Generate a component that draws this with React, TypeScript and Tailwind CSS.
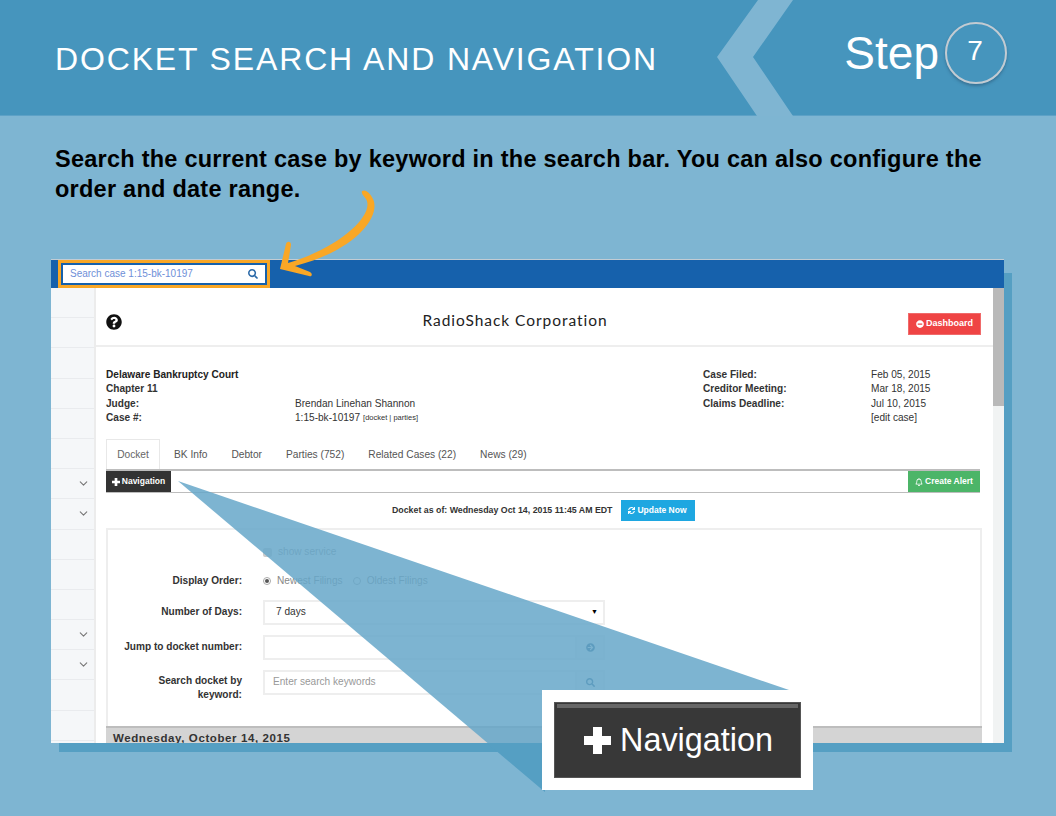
import { ChevronDown } from "lucide-react";
import {
    FaArrowCircleRight,
    FaMinusCircle,
    FaQuestionCircle,
    FaRegBell,
    FaSearch,
    FaSync,
} from "react-icons/fa";

const sideRows = [0, 1, 2, 3, 4, 5, 6, 7, 8, 9, 10, 11, 12, 13, 14, 15];
const chevrons = [6, 7, 11, 12];
const tabs = [
    { label: "BK Info", cls: "ml-[14px]" },
    { label: "Debtor", cls: "ml-[24px]" },
    { label: "Parties (752)", cls: "ml-[24px]" },
    { label: "Related Cases (22)", cls: "ml-[24px]" },
    { label: "News (29)", cls: "ml-[24px]" },
];

function ThickPlus({ size }: { size: number }) {
    return (
        <svg width={size} height={size} viewBox="0 0 27 27" fill="currentColor" className="shrink-0">
            <path d="M9 0h9v9h9v9h-9v9H9v-9H0V9h9z" />
        </svg>
    );
}

function App() {
    return (
        <div className="relative w-[1056px] h-[816px] overflow-hidden bg-[#7eb5d2] font-['Liberation_Sans',Arial,sans-serif]">
            {/* HEADER */}
            <div className="relative h-[116px] bg-[#4695bd] flex justify-between border-b border-[#5da1c6]">
                <svg className="absolute left-0 top-0" width="1056" height="116">
                    <polygon points="758,0 793,0 753,57 793,116 757,116 717,57" fill="#7fb5d2" />
                </svg>
                <h1 className="relative ml-[55px] mt-[41px] text-[32px] leading-[36px] tracking-[1.85px] text-white">
                    DOCKET SEARCH AND NAVIGATION
                </h1>
                <div className="relative flex items-start mr-[49px] mt-[22px]">
                    <span className="mt-[1px] text-[46px] leading-[60px] text-white">Step</span>
                    <div className="ml-[6px] w-[62px] h-[62px] rounded-full border-2 border-[#c3cbd2] shadow-[0_2px_3px_rgba(40,80,110,0.5)] flex items-center justify-center text-[28px] pb-[4px] pr-[2px] text-white">
                        7
                    </div>
                </div>
            </div>

            {/* BODY */}
            <p className="ml-[55px] mt-[28px] w-[960px] text-[23.5px] leading-[30px] tracking-[0.25px] font-bold text-black">
                Search the current case by keyword in the search bar. You can also configure the order and date range.
            </p>

            <div className="relative ml-[51px] mt-[55px] w-[953px] h-[484px]">
                <div className="absolute left-[8px] top-[14px] w-[953px] h-[479px] bg-[#559fc3]" />

                <div className="relative w-full h-full flex flex-col overflow-hidden bg-white">
                    {/* TOP BAR */}
                    <div className="h-[29px] shrink-0 bg-[#1661ac] border-t border-[#c2ccd4]">
                        <div className="ml-[7px] w-[212px] h-[28px] border-[3px] border-[#f9a726] bg-[#1661ac] p-[2px]">
                            <div className="h-full bg-white flex items-center justify-between pl-[7px] pr-[7px] pb-[1px] text-[10px] text-[#6f8fd8]">
                                <span>Search case 1:15-bk-10197</span>
                                <FaSearch className="text-[10px] text-[#2c6aa8]" />
                            </div>
                        </div>
                    </div>

                    <div className="flex flex-1 min-h-0">
                        {/* SIDEBAR */}
                        <div className="w-[45px] shrink-0 bg-[#f5f7f9] border-r-2 border-[#ececec] flex flex-col">
                            {sideRows.map((r) => (
                                <div key={r} className="h-[30.2px] shrink-0 border-b border-[#e9ebee] flex items-center justify-end pr-[4px] text-[#777]">
                                    {chevrons.includes(r) && <ChevronDown size={13} />}
                                </div>
                            ))}
                        </div>

                        {/* MAIN */}
                        <div className="flex-1 min-w-0 flex flex-col text-[10.1px] leading-[14.4px] text-[#333]">
                            <div className="h-[59px] shrink-0 border-b-2 border-[#eeeeee] flex items-center justify-between pl-[10px] pr-[12px] pt-[9px]">
                                <FaQuestionCircle className="text-[16px] text-[#111] mt-[1px]" />
                                <span className="font-['Lato',sans-serif] text-[15.5px] tracking-[0.95px] text-[#222] mb-[1px]">
                                    RadioShack Corporation
                                </span>
                                <button className="w-[73px] h-[22px] bg-[#ef4444] border border-[#f06a6a] text-white text-[9px] font-bold flex items-center justify-center gap-[2px] mt-[5px]">
                                    <FaMinusCircle className="text-[8px]" />
                                    Dashboard
                                </button>
                            </div>

                            {/* CASE DETAILS */}
                            <div className="flex shrink-0 mt-[21px] ml-[10px]">
                                <div className="w-[597px] shrink-0">
                                    <div className="font-bold text-[#222]">Delaware Bankruptcy Court</div>
                                    <div className="font-bold">Chapter 11</div>
                                    <div className="flex">
                                        <span className="w-[189px] font-bold">Judge:</span>
                                        <span>Brendan Linehan Shannon</span>
                                    </div>
                                    <div className="flex">
                                        <span className="w-[189px] font-bold">Case #:</span>
                                        <span>1:15-bk-10197</span>
                                        <span className="ml-[3px] text-[7.5px]">[docket | parties]</span>
                                    </div>
                                </div>
                                <div className="flex-1">
                                    <div className="flex">
                                        <span className="w-[168px] font-bold">Case Filed:</span>
                                        <span>Feb 05, 2015</span>
                                    </div>
                                    <div className="flex">
                                        <span className="w-[168px] font-bold">Creditor Meeting:</span>
                                        <span>Mar 18, 2015</span>
                                    </div>
                                    <div className="flex">
                                        <span className="w-[168px] font-bold">Claims Deadline:</span>
                                        <span>Jul 10, 2015</span>
                                    </div>
                                    <div className="ml-[168px]">[edit case]</div>
                                </div>
                            </div>

                            {/* TABS */}
                            <div className="flex items-center shrink-0 h-[30px] mt-[13.4px] ml-[10px] text-[10.2px] text-[#555]">
                                <div className="h-full w-[54px] flex items-center justify-center border border-b-0 border-[#e8e8e8] pt-[1px] text-[#666]">
                                    Docket
                                </div>
                                {tabs.map((t) => (
                                    <span key={t.label} className={`${t.cls} pt-[2px]`}>{t.label}</span>
                                ))}
                            </div>

                            <div className="h-[24px] shrink-0 ml-[10px] mr-[13px] border-t-2 border-b border-[#bdbdbd] flex justify-between">
                                <button className="w-[65px] h-full bg-[#333333] text-white text-[8.5px] font-bold flex items-center justify-center gap-[2px]">
                                    <ThickPlus size={8} />
                                    Navigation
                                </button>
                                <button className="w-[72px] h-full bg-[#4cb568] text-white text-[8.5px] font-bold flex items-center justify-center gap-[2px]">
                                    <FaRegBell className="text-[8px]" />
                                    Create Alert
                                </button>
                            </div>

                            {/* DOCKET AS OF */}
                            <div className="flex items-center mt-[7px] ml-[296px] h-[21px] shrink-0">
                                <span className="text-[8.8px] font-bold text-[#333]">Docket as of: Wednesday Oct 14, 2015 11:45 AM EDT</span>
                                <button className="ml-[8px] w-[74px] h-[21px] bg-[#1ea7e1] text-white text-[8.5px] font-bold flex items-center justify-center gap-[2px]">
                                    <FaSync className="text-[7px]" />
                                    Update Now
                                </button>
                            </div>

                            {/* FORM */}
                            <div className="mt-[7px] ml-[10px] mr-[11px] border-2 border-[#eeeeee] border-b-0 flex-1 flex flex-col pt-[14px] min-h-0">
                                <div className="flex items-center shrink-0 h-[16px] ml-[155px] text-[#999]">
                                    <span className="w-[9px] h-[9px] rounded-[2px] bg-[#ccc] mr-[6px]" />
                                    show service
                                </div>
                                <div className="flex items-center shrink-0 h-[16px] mt-[13px]">
                                    <span className="w-[134px] text-right font-bold">Display Order:</span>
                                    <span className="ml-[21px] w-[8px] h-[8px] rounded-full border border-[#aaa] flex items-center justify-center mr-[6px]">
                                        <span className="w-[4px] h-[4px] rounded-full bg-[#555]" />
                                    </span>
                                    <span className="text-[#888]">Newest Filings</span>
                                    <span className="ml-[10px] w-[8px] h-[8px] rounded-full border border-[#aaa] mr-[6px]" />
                                    <span className="text-[#888]">Oldest Filings</span>
                                </div>
                                <div className="flex items-center shrink-0 h-[25px] mt-[11px]">
                                    <span className="w-[134px] text-right font-bold">Number of Days:</span>
                                    <div className="ml-[21px] w-[342px] h-full border-2 border-[#eeeeee] flex items-center justify-between pl-[11px] pr-[5px]">
                                        7 days
                                        <span className="text-[7px] text-black">▼</span>
                                    </div>
                                </div>
                                <div className="flex items-center shrink-0 h-[25px] mt-[10px]">
                                    <span className="w-[134px] text-right font-bold">Jump to docket number:</span>
                                    <div className="ml-[21px] w-[342px] h-full border-2 border-[#eeeeee] flex justify-end">
                                        <div className="w-[28px] h-full border-l-2 border-[#eeeeee] bg-[#f5f5f5] flex items-center justify-center text-[#2c5f85]">
                                            <FaArrowCircleRight className="text-[9px]" />
                                        </div>
                                    </div>
                                </div>
                                <div className="flex items-start mt-[10px] h-[56px] shrink-0">
                                    <span className="w-[134px] text-right font-bold pt-[4px]">
                                        Search docket by
                                        <br />
                                        keyword:
                                    </span>
                                    <div className="ml-[21px] w-[342px] h-[25px] border-2 border-[#eeeeee] flex items-center justify-between pl-[8px] text-[#999]">
                                        Enter search keywords
                                        <div className="w-[28px] h-full border-l-2 border-[#eeeeee] bg-[#f5f5f5] flex items-center justify-center text-[#2c5f85]">
                                            <FaSearch className="text-[9px]" />
                                        </div>
                                    </div>
                                </div>
                                <div className="-mx-[2px] h-[20px] shrink-0 bg-[#d4d4d4] border-t-2 border-[#bdbdbd] pl-[7px] text-[11.5px] leading-[20px] tracking-[0.6px] font-bold text-[#333]">
                                    Wednesday, October 14, 2015
                                </div>
                            </div>
                        </div>

                        {/* SCROLLBAR */}
                        <div className="w-[11px] shrink-0 bg-[#f1f3f3]">
                            <div className="h-[118px] bg-[#b9b9b9]" />
                        </div>
                    </div>
                </div>
            </div>

            {/* CALLOUT WEDGE AND ARROW */}
            <svg className="absolute left-0 top-0" width="1056" height="816">
                <polygon points="178,481 792,691 792,700 543,790" fill="#66a7c9" fillOpacity="0.85" />
                <polygon points="487,743 545,743 545,792" fill="#559fc3" />
                <path
                    d="M362,191 C366,189 370,193 373,199 C381,216 357,250 295,266 L310,272 C313,274 312,277 309,276 L280,269 L286,244 C287,241 291,241 291,245 L288,263 C342,247 375,214 366,199 C364,196 361,194 362,191 Z"
                    fill="#f9a726"
                />
            </svg>

            {/* ZOOMED NAVIGATION BUTTON */}
            <div className="absolute left-[542px] top-[690px] w-[271px] h-[100px] bg-white p-[12px]">
                <div className="w-[247px] h-[76px] bg-[#383838] border border-[#555] pt-[1px] px-[1px] flex flex-col">
                    <div className="h-[4px] mx-[1px] bg-[#666666]" />
                    <div className="flex-1 flex items-center pl-[28px] pb-[4px] text-[32.4px] text-white">
                        <span className="mr-[9px]"><ThickPlus size={27} /></span>
                        Navigation
                    </div>
                </div>
            </div>
        </div>
    );
}

export default App;
